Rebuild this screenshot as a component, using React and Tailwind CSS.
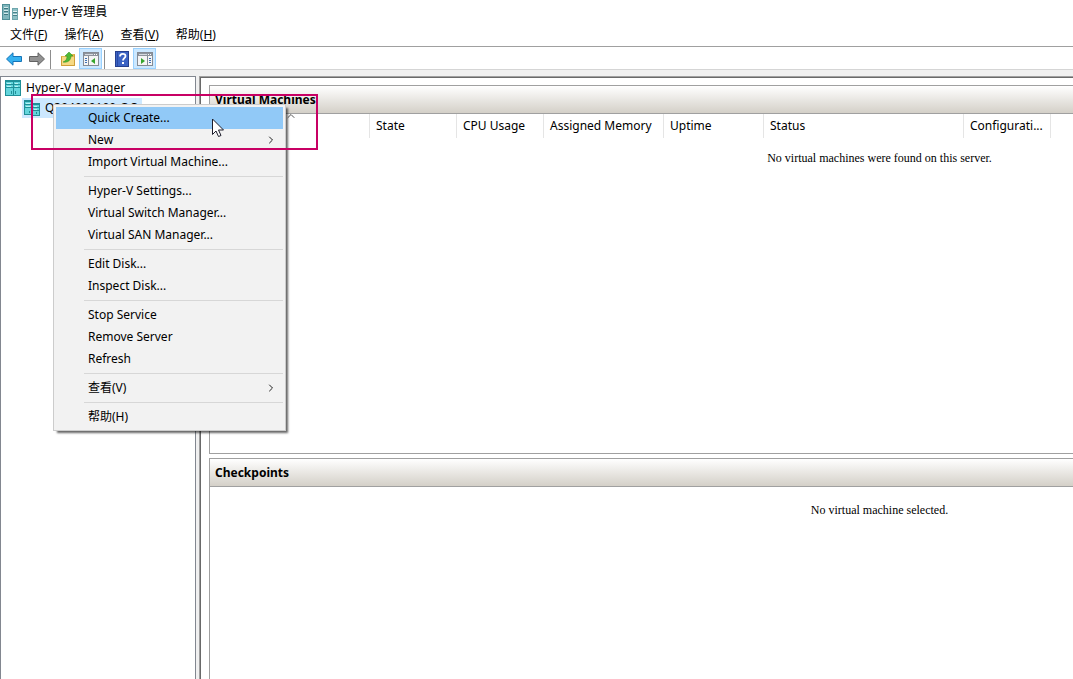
import React from 'react';
import { ChevronRight, ChevronUp } from 'lucide-react';

const menuBar = [
  { label: '文件', accessKey: 'F' },
  { label: '操作', accessKey: 'A' },
  { label: '查看', accessKey: 'V' },
  { label: '帮助', accessKey: 'H' },
];

const columns = [
  { label: 'Name', width: 'w-[160px]' },
  { label: 'State', width: 'w-[87px]' },
  { label: 'CPU Usage', width: 'w-[87px]' },
  { label: 'Assigned Memory', width: 'w-[120px]' },
  { label: 'Uptime', width: 'w-[100px]' },
  { label: 'Status', width: 'w-[200px]' },
  { label: 'Configurati...', width: 'w-[87px]' },
];

const contextGroups = [
  [{ label: 'Quick Create...', active: true }, { label: 'New', submenu: true }, { label: 'Import Virtual Machine...' }],
  [{ label: 'Hyper-V Settings...' }, { label: 'Virtual Switch Manager...' }, { label: 'Virtual SAN Manager...' }],
  [{ label: 'Edit Disk...' }, { label: 'Inspect Disk...' }],
  [{ label: 'Stop Service' }, { label: 'Remove Server' }, { label: 'Refresh' }],
  [{ label: '查看(V)', submenu: true }],
  [{ label: '帮助(H)' }],
];

const AppIcon = () => (
  <svg width="16" height="16" viewBox="0 0 16 16" aria-hidden="true">
    <rect x="0" y="0" width="8" height="16" fill="#4f8f97" />
    <rect x="1" y="1" width="6" height="14" fill="#7fb5bb" />
    <path d="M2 3.5h4M2 6.5h4M2 9.5h4" stroke="#d3eaec" />
    <path d="M2 4.5h4M2 7.5h4M2 10.5h4" stroke="#3e7780" />
    <rect x="10" y="4" width="6" height="12" fill="#6ea6ad" />
    <rect x="11" y="5" width="4" height="10" fill="#8dc0c5" />
    <path d="M11 7.5h4M11 10.5h4" stroke="#e0f1f2" />
    <path d="M11 8.5h4M11 11.5h4" stroke="#47818a" />
  </svg>
);

const ManagerIcon = () => (
  <svg width="16" height="16" viewBox="0 0 16 16" aria-hidden="true">
    <rect x="0" y="0" width="16" height="16" fill="#1f8f98" />
    <rect x="1" y="2" width="7" height="13" fill="#63d5dc" />
    <rect x="9" y="2" width="6" height="13" fill="#63d5dc" />
    <path d="M1 4.5h14M1 7.5h14" stroke="#1f8f98" />
    <path d="M2 3.5h4M10 3.5h3M2 6.5h4M10 6.5h3" stroke="#b9f3f5" />
    <path d="M6 11h1v3h-1zM10 11h1v3h-1z" fill="#1f8f98" />
  </svg>
);

const ServerIcon = () => (
  <svg width="16" height="16" viewBox="0 0 16 16" aria-hidden="true">
    <rect x="0" y="0" width="9" height="15" fill="#1f8f98" />
    <rect x="1" y="2" width="7" height="12" fill="#63d5dc" />
    <path d="M1 4.5h7M1 7.5h7" stroke="#1f8f98" />
    <path d="M2 3.5h4M2 6.5h4" stroke="#b9f3f5" />
    <rect x="8" y="3" width="8" height="13" fill="#1f8f98" />
    <rect x="9" y="5" width="6" height="10" fill="#63d5dc" />
    <path d="M9 7.5h6M9 10.5h6" stroke="#1f8f98" />
    <path d="M10 6.5h3M10 9.5h3" stroke="#b9f3f5" />
    <path d="M5 11h1v2h-1zM12 12h1v2h-1z" fill="#1f8f98" />
  </svg>
);

const ArrowIcon = ({ forward }) => (
  <svg width="16" height="14" viewBox="0 0 16 14" aria-hidden="true">
    {forward ? (
      <path d="M15.5 7L9 .8v3.700H.5v5H9v3.700z" fill="#929292" stroke="#626262" />
    ) : (
      <path d="M.5 7L7 .8v3.700h8.500v5H7v3.700z" fill="#35b1f0" stroke="#1674b8" />
    )}
  </svg>
);

const FolderIcon = () => (
  <svg width="16" height="16" viewBox="0 0 16 16" aria-hidden="true">
    <path d="M1 5h7l1-2h6v12H1z" fill="#e3b94f" />
    <path d="M2 6h12v8H2z" fill="#f6d985" />
    <path d="M1.500 5.500v9h13V3.500" stroke="#cf9f3a" fill="none" />
    <path d="M3 11c3-1 4-3 4-6H5l4-4 4 4h-2c0 4-3 7-8 6z" fill="#4fb935" stroke="#2f8f22" strokeWidth=".5" />
  </svg>
);

const PaneIcon = ({ right }) => (
  <svg width="16" height="14" viewBox="0 0 16 14" aria-hidden="true">
    <rect x=".5" y=".5" width="15" height="13" fill="#f5f5f5" stroke="#858b94" />
    <path d="M1 1h14v3H1z" fill="#8e949d" />
    <path d="M2 2.500h8" stroke="#d6dae0" />
    <path d="M11 2.500h1M13 2.500h1" stroke="#fff" />
    {right ? (
      <>
        <path d="M10.500 4v9" stroke="#858b94" />
        <path d="M12 6.500h2M12 8.500h2M12 10.500h2" stroke="#3e70b4" />
        <path d="M4 6v6l4-3z" fill="#35a52d" />
      </>
    ) : (
      <>
        <path d="M5.500 4v9" stroke="#858b94" />
        <path d="M2 6.500h2M2 8.500h2M2 10.500h2" stroke="#3e70b4" />
        <path d="M12 6v6L8 9z" fill="#35a52d" />
      </>
    )}
  </svg>
);

const HelpIcon = () => (
  <svg width="14" height="16" viewBox="0 0 14 16" aria-hidden="true">
    <rect x=".5" y=".5" width="13" height="15" fill="#3c63c4" stroke="#253f8e" />
    <path d="M2.500 1v14" stroke="#2b4ba6" />
    <path d="M5 5.500C5 2 10.500 2 10.500 5c0 2-2.500 2.300-2.500 4.500" stroke="#fff" strokeWidth="1.800" fill="none" />
    <rect x="7" y="11" width="2" height="2" fill="#fff" />
  </svg>
);

const PointerIcon = () => (
  <svg width="12" height="20" viewBox="0 0 12 20" aria-hidden="true">
    <path d="M.5 1v15.500L4 13l2.500 5.500 2.500-1L6.500 12h5z" fill="#fff" stroke="#1d1d2b" />
  </svg>
);

const ToolButton = ({ label, pressed, children }) => (
  <button
    aria-label={label}
    className={`flex h-[21px] w-[23px] items-center justify-center ${pressed ? 'border border-[#99d1ff] bg-[#cce8ff]' : ''}`}
  >
    {children}
  </button>
);

const ToolSeparator = () => <div className="mr-[5px] ml-[2px] h-[19px] w-px bg-[#8d8d8d]" />;

const PanelHeader = ({ children }) => (
  <h2 className="h-7 border-b border-[#a0a0a0] bg-linear-to-b from-white to-[#d4d0c8] pl-[5px] text-[12px] leading-[27px] font-bold">
    {children}
  </h2>
);

const ContextMenu = () => (
  <div
    role="menu"
    className="absolute top-[104px] left-[53px] w-[233px] border border-[#ccc] bg-[#f2f2f2] p-[2px] shadow-[3px_3px_2px_-1px_rgba(0,0,0,0.6)]"
  >
    {contextGroups.map((group, index) => (
      <div key={index}>
        {index > 0 && <div className="my-[3px] ml-7 h-px bg-[#d7d7d7]" />}
        {group.map((item) => (
          <button
            key={item.label}
            role="menuitem"
            className={`flex h-[22px] w-full items-center justify-between pr-[6px] pl-8 text-left ${item.active ? 'bg-[#91c9f7]' : ''}`}
          >
            <span>{item.label}</span>
            {item.submenu && <ChevronRight size={12} strokeWidth={2} className="text-[#222]" />}
          </button>
        ))}
      </div>
    ))}
  </div>
);

export default function App() {
  return (
    <div className="relative flex min-h-screen flex-col overflow-hidden bg-[#f0f0f0] font-['Noto_Sans','Noto_Sans_CJK_SC',sans-serif] text-[12px] leading-4 text-black">
      {/* Title bar */}
      <header className="flex h-[23px] items-center gap-[5px] bg-white pl-[2px]">
        <AppIcon />
        <h1>Hyper-V 管理員</h1>
      </header>

      {/* Menu bar */}
      <nav className="flex h-6 items-center gap-[17px] border-b border-[#a0a0a0] bg-white pl-[10px]">
        {menuBar.map((item) => (
          <button key={item.label}>
            {item.label}(<u>{item.accessKey}</u>)
          </button>
        ))}
      </nav>

      {/* Toolbar */}
      <div className="flex h-[23px] items-end border-b border-[#d5d5d5] bg-white pl-[2px]">
        <ToolButton label="Back"><ArrowIcon /></ToolButton>
        <ToolButton label="Forward"><ArrowIcon forward /></ToolButton>
        <ToolSeparator />
        <ToolButton label="Up one level"><FolderIcon /></ToolButton>
        <ToolButton label="Show or hide console tree" pressed><PaneIcon /></ToolButton>
        <ToolSeparator />
        <ToolButton label="Help"><HelpIcon /></ToolButton>
        <ToolButton label="Show or hide action pane" pressed><PaneIcon right /></ToolButton>
      </div>

      <div className="flex flex-1 gap-[3px] pt-[6px]">
        {/* Console tree */}
        <aside className="w-[196px] shrink-0 border border-b-0 border-[#828790] bg-white pt-px">
          <div className="flex h-5 items-center gap-[5px] pl-1">
            <ManagerIcon />
            <span>Hyper-V Manager</span>
          </div>
          <div className="ml-[21px] flex h-5 w-[120px] items-center gap-[5px] bg-[#cce8ff] pl-[2px]">
            <ServerIcon />
            <span>Q304000100-QC</span>
          </div>
        </aside>

        <div className="flex min-w-0 flex-1 border-t border-l border-[#a0a0a0]">
          <main className="flex min-w-0 flex-1 flex-col gap-1 border-t border-l border-[#696969] bg-white pt-[7px] pl-2">
            <section className="h-[369px] border border-r-0 border-[#a0a0a0]">
              <PanelHeader>Virtual Machines</PanelHeader>
              <table className="w-[841px] table-fixed border-separate border-spacing-0">
                <thead>
                  <tr className="h-6 text-left">
                    {columns.map((column) => (
                      <th key={column.label} className={`border-r border-[#e5e5e5] pl-[6px] font-normal whitespace-nowrap ${column.width}`}>
                        {column.label}
                      </th>
                    ))}
                  </tr>
                </thead>
              </table>
              <p className="pt-3 pl-[476px] text-center font-['Liberation_Serif',serif]">
                No virtual machines were found on this server.
              </p>
            </section>

            <section className="flex-1 border border-r-0 border-b-0 border-[#a0a0a0]">
              <PanelHeader>Checkpoints</PanelHeader>
              <p className="pt-[15px] pl-[476px] text-center font-['Liberation_Serif',serif]">
                No virtual machine selected.
              </p>
            </section>
          </main>
        </div>
      </div>

      {/* Sort arrow of the Name column */}
      <ChevronUp size={12} strokeWidth={2} className="absolute top-[110px] left-[285px] text-[#555]" />

      <ContextMenu />

      {/* Highlight frame around Quick Create */}
      <div className="pointer-events-none absolute top-[94px] left-[31px] h-14 w-[287px] border-2 border-[#c80064]" />
      <div className="pointer-events-none absolute top-[118px] left-[212px]">
        <PointerIcon />
      </div>
    </div>
  );
}
